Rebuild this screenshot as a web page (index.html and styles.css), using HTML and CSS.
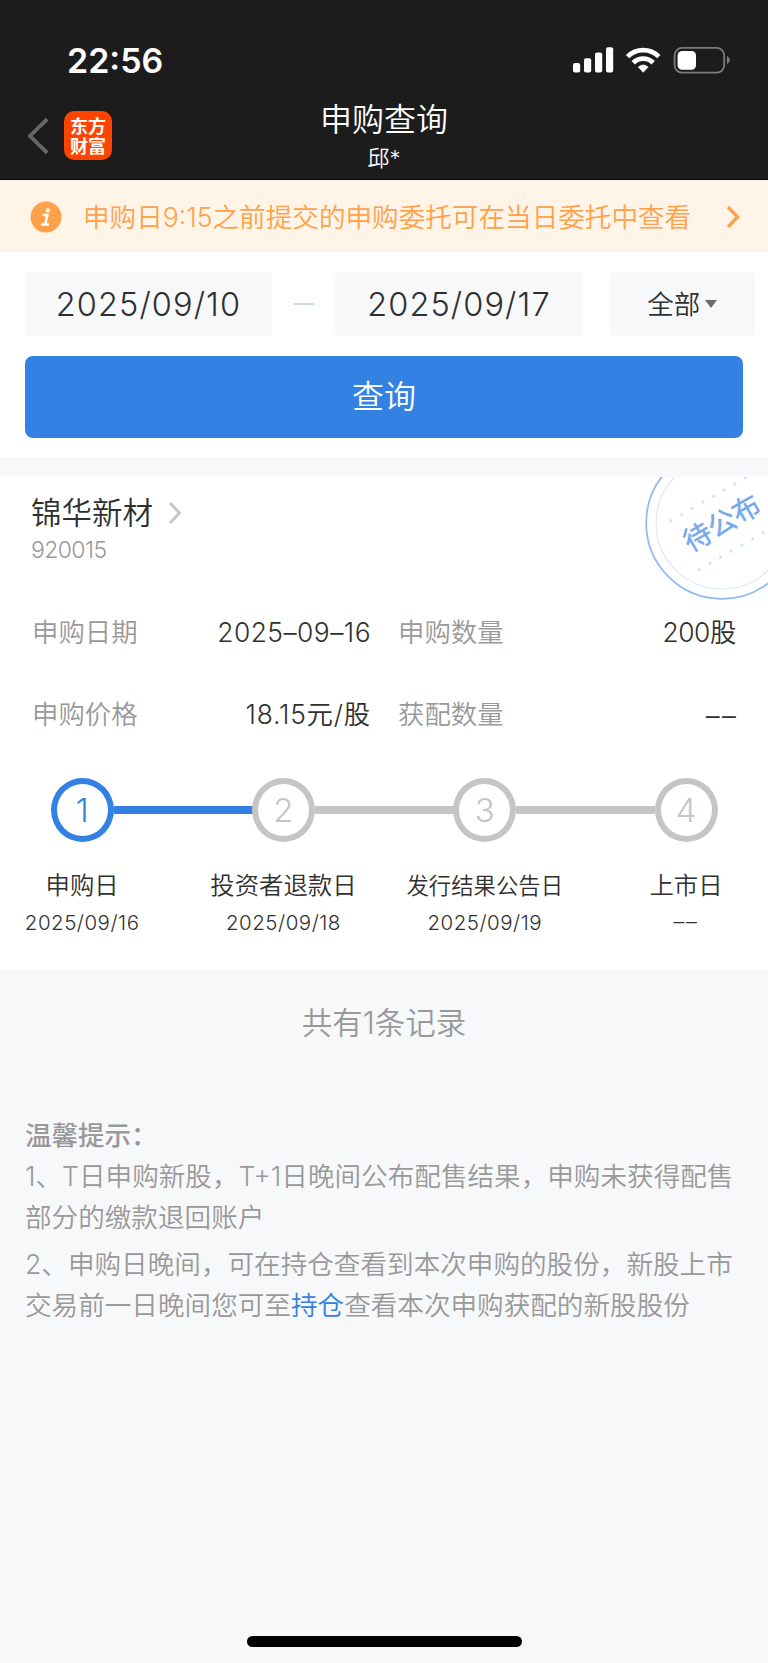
FILE: index.html
```html
<!DOCTYPE html>
<html lang="zh-CN">
<head>
<meta charset="utf-8">
<title>申购查询</title>
<link rel="stylesheet" href="styles.css">
</head>
<body>
<div class="app">
  <header class="header">
    <div class="status">
      <span class="clock">22:56</span>
      <svg class="status-icons" width="158" height="28" viewBox="0 0 158 28">
        <g fill="#fff">
          <rect x="0" y="16" width="7.2" height="9.6" rx="2"/>
          <rect x="11" y="11.3" width="7.2" height="14.3" rx="2"/>
          <rect x="22" y="5.5" width="7.2" height="20.1" rx="2"/>
          <rect x="33" y="0.3" width="7.2" height="25.3" rx="2"/>
          <path d="M70.2 25.3 65.2 20.1Q70.2 15.8 75.2 20.1Z" stroke="#fff" stroke-width=".6" stroke-linejoin="round"/>
        </g>
        <g fill="none" stroke="#fff" stroke-width="4.8">
          <path d="M54.6 9.6a22 22 0 0 1 31.2 0"/>
          <path d="M60.2 15.7a14.2 14.2 0 0 1 20 0"/>
        </g>
        <rect x="101.6" y="0.9" width="49.6" height="24.8" rx="7.5" fill="none" stroke="#7b7b7b" stroke-width="1.8"/>
        <rect x="104.6" y="3.9" width="18.4" height="18.8" rx="4.5" fill="#fff"/>
        <path d="M154 8.8q5.6 4.3 0 8.8z" fill="#7b7b7b"/>
      </svg>
    </div>
    <div class="navbar">
      <div class="nav-left">
        <svg class="back" width="22" height="38" viewBox="0 0 22 38"><path d="M20.2 2.2 3 19 20.2 35.8" fill="none" stroke="#686868" stroke-width="3.8"/></svg>
        <div class="logo"><span>东方财富</span></div>
      </div>
      <div class="nav-title">
        <h1>申购查询</h1>
        <p>邱*</p>
      </div>
      <div></div>
    </div>
  </header>

  <div class="notice">
    <svg width="32" height="32" viewBox="0 0 32 32"><circle cx="16" cy="16" r="15.4" fill="#ffa14a"/><circle cx="17.8" cy="9.4" r="2.1" fill="#fff"/><path d="M12.8 14h4.5L15.2 23.4M11 23.4h8" fill="none" stroke="#fff" stroke-width="2.5"/></svg>
    <span class="notice-text">申购日<i class="num">9:15</i>之前提交的申购委托可在当日委托中查看</span>
    <svg width="16" height="24" viewBox="0 0 16 24"><path d="M3 2 12.5 12 3 22" fill="none" stroke="#ffa14a" stroke-width="3.4"/></svg>
  </div>

  <section class="filter">
    <div class="filter-row">
      <div class="date">2025/09/10</div>
      <span class="dash"></span>
      <div class="date">2025/09/17</div>
      <div class="type">全部<span class="caret"></span></div>
    </div>
    <div class="submit">查询</div>
  </section>

  <section class="card">
    <svg class="stamp" width="160" height="160" viewBox="0 0 160 160">
      <circle cx="80" cy="80" r="75.8" fill="none" stroke="#8fb9f1" stroke-width="1.7"/>
      <circle cx="80" cy="80" r="66" fill="none" stroke="#dce9fb" stroke-width="1.2"/>
      <g transform="rotate(-30 80 80)">
        <text class="stamp-text" x="80" y="90" text-anchor="middle">待公布</text>
        <path d="M37 52.5H124M37 109H124" fill="none" stroke="#d3e4fb" stroke-width="3.2" stroke-linecap="round" stroke-dasharray="0 12.3"/>
      </g>
    </svg>
    <div class="stock-name">锦华新材
      <svg width="14" height="24" viewBox="0 0 14 24"><path d="M2 2 11.5 12 2 22" fill="none" stroke="#c6c6c6" stroke-width="3"/></svg>
    </div>
    <div class="stock-code">920015</div>
    <div class="facts">
      <div class="fact"><span class="label">申购日期</span><span class="value">2025–09–16</span></div>
      <div class="fact"><span class="label">申购数量</span><span class="value tight">200股</span></div>
      <div class="fact"><span class="label">申购价格</span><span class="value wide">18.15元/股</span></div>
      <div class="fact"><span class="label">获配数量</span><span class="value dashes">––</span></div>
    </div>
    <div class="steps">
      <div class="step active"><span class="dot">1</span><span class="name">申购日</span><span class="day">2025/09/16</span></div>
      <div class="step"><span class="dot">2</span><span class="name">投资者退款日</span><span class="day">2025/09/18</span></div>
      <div class="step"><span class="dot">3</span><span class="name small">发行结果公告日</span><span class="day">2025/09/19</span></div>
      <div class="step"><span class="dot">4</span><span class="name">上市日</span><span class="day dashes">––</span></div>
    </div>
  </section>

  <p class="count">共有<i class="num">1</i>条记录</p>

  <section class="tips">
    <h2>温馨提示：</h2>
    <p><span class="line"><i class="num">1</i>、<i class="num">T</i>日申购新股，<i class="num">T+1</i>日晚间公布配售结果，申购未获得配售</span><span class="line">部分的缴款退回账户</span></p>
    <p><span class="line"><i class="num">2</i>、申购日晚间，可在持仓查看到本次申购的股份，新股上市</span><span class="line">交易前一日晚间您可至<a class="link">持仓</a>查看本次申购获配的新股股份</span></p>
  </section>
  <div class="home"></div>
</div>
</body>
</html>
```
FILE: styles.css
```css
* { box-sizing: border-box; margin: 0; padding: 0; }
body {
  width: 768px;
  background: #f7f8fa;
  font-family: "Inter", "Noto Sans CJK SC", sans-serif;
  font-weight: 350;
  color: #303030;
  white-space: nowrap;
}
svg { display: block; flex: none; }
.num { font-style: normal; }
.app { height: 1663px; display: flex; flex-direction: column; overflow: hidden; }

.header { height: 180px; background: #1c1c1c; color: #fff; border-bottom: 1px solid #080808; }
.status { height: 96px; padding: 47px 37px 0 67px; display: flex; justify-content: space-between; }
.clock { font-size: 34px; font-weight: 600; line-height: 28px; }
.navbar { height: 83px; display: grid; grid-template-columns: 1fr auto 1fr; }
.nav-left { display: flex; align-items: center; padding: 0 0 4px 27px; gap: 15px; }
.logo {
  width: 48px; height: 49px; border-radius: 10px; background: #ff4400;
  display: flex; align-items: center; justify-content: center; padding-bottom: 2px;
  font-family: "Noto Sans CJK SC", sans-serif; font-weight: 700; font-size: 18px; line-height: 20px;
}
.logo span { width: 36px; white-space: normal; }
.nav-title { text-align: center; }
.nav-title h1 { font-size: 32px; font-weight: 350; line-height: 47px; }
.nav-title p { font-size: 22px; line-height: 30px; }

.notice { height: 72px; background: #fef4e7; color: #ffa14a; display: flex; align-items: center; padding: 1px 27px 0 30px; }
.notice-text { flex: 1; margin-left: 21px; padding-top: 1px; font-size: 26.6px; line-height: 40px; }

.filter { height: 205px; background: #fff; padding: 20px 0 0 24.7px; }
.filter-row { display: flex; align-items: center; height: 64px; }
.date, .type { height: 64px; background: #f7f8fa; border-radius: 4px; display: flex; align-items: center; justify-content: center; }
.date { width: 247.5px; font-size: 32.5px; letter-spacing: 1.1px; }
.dash { width: 22px; height: 2px; background: #d3dae0; margin: 0 20.5px; }
.type { width: 145px; margin-left: 27px; font-size: 26.5px; line-height: 40px; padding-bottom: 1px; }
.caret { margin-left: 5px; border: solid transparent; border-width: 8px 6.5px 0; border-top-color: #6a6a6a; }
.submit {
  width: 718.5px; height: 82px; margin-top: 20px; border-radius: 8px; background: #3281e3;
  color: #fff; font-size: 32px; line-height: 82px; text-align: center;
}

.card { position: relative; height: 493px; margin-top: 20px; background: #fff; overflow: hidden; padding: 15px 0 0; }
.stamp { position: absolute; left: 641.7px; top: -34.3px; }
.stamp-text { font-size: 28px; font-weight: 400; fill: #75a8ee; stroke: #75a8ee; stroke-width: 0.4px; }
.stock-name { display: flex; align-items: center; gap: 15px; padding-left: 31px; font-size: 30.5px; line-height: 42px; }
.stock-code { padding-left: 31px; font-size: 23px; line-height: 32px; letter-spacing: -0.6px; color: #999; }
.facts { display: grid; grid-template-columns: 339px 338px; column-gap: 27px; padding: 25px 0 0 32px; }
.fact { height: 82px; display: flex; align-items: center; justify-content: space-between; font-size: 26.4px; line-height: 40px; }
.label { color: #999; }
.value { letter-spacing: 0.45px; }
.value.tight { letter-spacing: -0.4px; }
.value.wide { letter-spacing: 0.8px; }
.dashes { font-family: "Liberation Sans", sans-serif; font-weight: 400; }
.value.dashes { font-size: 25px; letter-spacing: 2.2px; margin-right: -2px; padding-top: 1px; }
.day.dashes { font-size: 19.5px; letter-spacing: 1.8px; padding-top: 0; }
.steps { display: flex; padding-top: 23px; margin-left: -18.5px; }
.step { position: relative; width: 201.3px; display: flex; flex-direction: column; align-items: center; flex: none; }
.dot {
  width: 63px; height: 64px; border: 6px solid #c5c5c5; border-radius: 50%;
  display: flex; align-items: center; justify-content: center;
  font-size: 33px; font-weight: 300; color: #c5c5c5;
}
.step:not(:last-child)::after {
  content: ""; position: absolute; left: 132px; top: 28px; width: 139px; height: 8px; background: #c5c5c5;
}
.step.active .dot { border-color: #3281e3; color: #3281e3; }
.step.active::after { background: #3281e3; }
.name { margin-top: 25px; font-size: 24.4px; line-height: 36px; }
.name.small { font-size: 22.4px; padding-top: 1px; line-height: 35px; }
.day { padding-top: 2px; font-size: 20.5px; line-height: 36px; letter-spacing: 0.5px; }

.count { margin-top: 30px; text-align: center; font-size: 30.5px; line-height: 46px; color: #999; }

.tips { margin-top: 69px; padding-left: 25px; font-size: 26.6px; line-height: 41px; color: #999; }
.tips h2 { font-size: 26.5px; font-weight: 500; line-height: 41px; }
.tips p + p { margin-top: 6px; }
.line { display: block; }
.link { color: #3281e3; }
.home { width: 275px; height: 11px; border-radius: 6px; background: #000; margin: auto auto 16px 247px; }
```
